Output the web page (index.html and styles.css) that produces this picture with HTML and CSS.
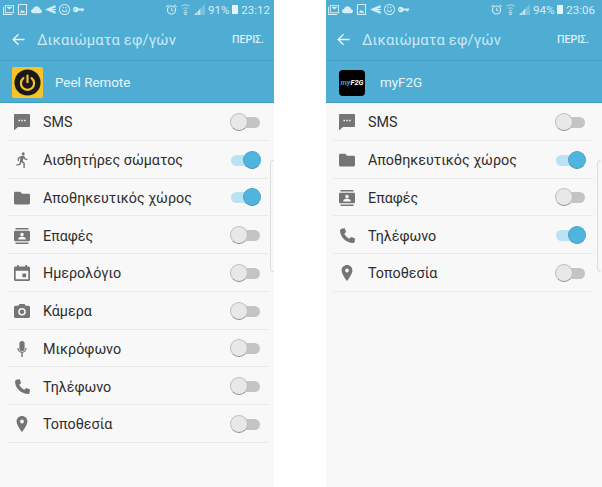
FILE: index.html
```html
<!DOCTYPE html>
<html lang="en">
<head>
  <meta charset="UTF-8">
  <title>Δικαιώματα εφ/γών</title>
  <link rel="stylesheet" href="styles.css">
</head>
<body>

<svg class="defs" width="0" height="0">
  <symbol id="i-sms" viewBox="0 0 16 16"><path d="M1 0h14a1 1 0 0 1 1 1v11a1 1 0 0 1-1 1H4l-4 3.400V1a1 1 0 0 1 1-1z"/><path fill="#f8f8f8" d="M4.500 5.700h1.500v1.500H4.500zM7.300 5.700h1.500v1.500H7.300zM10.100 5.700h1.500v1.500h-1.500z"/></symbol>
  <symbol id="i-run" viewBox="0 0 16 16"><circle cx="9.200" cy="1.800" r="1.500"/><path d="M7 4l3-.4 1.300 2.600 2.300.9-.4 1.200-3-1.100-.7-1.200-.7 3 2 1.900V16h-1.400v-4.300L7.300 10l-.6 2.800-4.200 1-.3-1.300 3.200-.8L6.400 6 5 6.800V9H3.700V6z"/></symbol>
  <symbol id="i-folder" viewBox="0 0 16 16"><path d="M1.300 1.800h5l1.700 2h6.700c.7 0 1.300.6 1.300 1.300v8c0 .7-.6 1.300-1.300 1.300H1.300C.6 14.400 0 13.800 0 13.100V3.100c0-.7.600-1.300 1.300-1.300z"/></symbol>
  <symbol id="i-contact" viewBox="0 0 16 16"><path d="M1.500 0h13v1.400h-13zM1.500 14.600h13V16h-13z"/><path fill-rule="evenodd" d="M1.300 2.700h13.400c.7 0 1.300.6 1.300 1.300v8c0 .7-.6 1.300-1.300 1.300H1.300C.6 13.300 0 12.700 0 12V4c0-.7.600-1.300 1.300-1.300zM8 4.700a1.800 1.800 0 1 0 0 3.600 1.800 1.800 0 0 0 0-3.600zM4.300 11.600h7.400v-1c0-1.300-2.500-1.900-3.700-1.900s-3.700.6-3.700 1.900z"/></symbol>
  <symbol id="i-cal" viewBox="0 0 16 16"><path fill-rule="evenodd" d="M3 0h1.700v1.600h6.600V0H13v1.600h1.500c.8 0 1.500.7 1.500 1.500v11.400c0 .8-.7 1.500-1.500 1.500h-13C.7 16 0 15.300 0 14.500V3.100c0-.8.700-1.500 1.500-1.500H3zM1.700 5.700v8.600h12.600V5.700zM8.400 8.500h3.700v3.700H8.400z"/></symbol>
  <symbol id="i-cam" viewBox="0 0 16 16"><path fill-rule="evenodd" d="M5.500 1h5l1.300 1.700h2.700c.8 0 1.500.7 1.500 1.500v9.300c0 .8-.7 1.500-1.500 1.500h-13C.7 15 0 14.300 0 13.500V4.200c0-.8.700-1.500 1.500-1.500h2.700zM8 5a3.800 3.800 0 1 0 0 7.600A3.800 3.800 0 0 0 8 5zm0 1.500a2.300 2.300 0 1 1 0 4.600 2.300 2.300 0 0 1 0-4.600z"/></symbol>
  <symbol id="i-mic" viewBox="0 0 16 16"><path d="M8 0a2.600 2.600 0 0 1 2.600 2.600v5a2.600 2.600 0 0 1-5.200 0v-5A2.600 2.600 0 0 1 8 0z"/><path d="M3.300 7h1.200c0 2.100 1.500 3.700 3.500 3.700s3.500-1.600 3.500-3.700h1.200c0 2.600-1.900 4.500-4 4.800V16H7.300v-4.200c-2.100-.3-4-2.200-4-4.800z"/></symbol>
  <symbol id="i-phone" viewBox="0 0 16 16"><path d="M3.200.5L5.800.2l1.300 3.700-1.800 1.800c.9 2 2.700 3.900 5 5l1.800-1.800 3.700 1.300v2.700c0 1-.8 2.100-1.800 2.100C6.900 15 1 8.900 1 2.600 1 1.500 2.200.5 3.200.5z"/></symbol>
  <symbol id="i-pin" viewBox="0 0 16 16"><path fill-rule="evenodd" d="M8 0c3 0 5.400 2.400 5.400 5.400C13.400 9.400 8 16 8 16S2.600 9.400 2.600 5.400C2.600 2.400 5 0 8 0zm0 3.600a1.900 1.900 0 1 0 0 3.800 1.900 1.900 0 0 0 0-3.800z"/></symbol>

  <symbol id="s-mail" viewBox="0 0 12 12"><path fill-rule="evenodd" d="M2 1h10v9H2zM3 2v7h8V2zM3.500 3h7L7 6zM0 3h1v8h9v1H0z"/></symbol>
  <symbol id="s-pic" viewBox="0 0 12 12"><path fill-rule="evenodd" d="M2 0h9v12H1V1zM2.200 1.200v9.600h7.600V1.200zM3 9.500l2-3 1.500 1.500 1-1 1.500 2.500z"/></symbol>
  <symbol id="s-cloud" viewBox="0 0 12 12"><path d="M2.500 10C1 10 0 9 0 7.700 0 6.500 1 5.500 2.200 5.500 2.700 3.700 4.300 2.500 6 2.500c2 0 3.700 1.500 3.900 3.300 1.200.1 2.100 1 2.100 2.100S11 10 9.800 10z"/></symbol>
  <symbol id="s-send" viewBox="0 0 12 12"><path d="M11.500 1v3L7 5.500h5v1H7l4.500 1.500v3L0 6z"/></symbol>
  <symbol id="s-face" viewBox="0 0 12 12"><path fill-rule="evenodd" d="M6 0a6 6 0 1 1 0 12A6 6 0 0 1 6 0zm0 1a5 5 0 1 0 0 10A5 5 0 0 0 6 1zM3 6h1c.2 1.200 1 2 2 2s1.800-.8 2-2h1c-.2 1.800-1.400 3-3 3S3.200 7.800 3 6zM4 3h1.200v1.500H4zM6.800 3H8v1.500H6.800z"/></symbol>
  <symbol id="s-key" viewBox="0 0 12 12"><path fill-rule="evenodd" d="M3 3a3 3 0 0 1 2.800 2H12v2h-1.300v1.200H9.300V7H5.800A3 3 0 1 1 3 3zm-.6 2.300a.8.8 0 1 0 0 1.400.8.8 0 0 0 0-1.400z"/></symbol>
  <symbol id="s-alarm" viewBox="0 0 12 12"><path fill-rule="evenodd" d="M6 1.500a5 5 0 1 1 0 10 5 5 0 0 1 0-10zm0 1.200a3.800 3.800 0 1 0 0 7.600 3.800 3.800 0 0 0 0-7.600zM5.500 4h1v2.300l1.600 1-.5.8-2.100-1.300zM0 2.700L2.500.5l.7.7L.7 3.500zM12 2.700L9.500.5l-.7.7 2.500 2.300z"/></symbol>
  <symbol id="s-wifi" viewBox="0 0 12 12"><path fill-opacity=".55" d="M1 2c2.500-2.300 7.500-2.300 10 0l-1 1C8 1.300 4 1.300 2 3zM3 4.500c1.700-1.300 4.300-1.300 6 0l-1 1c-1.200-.8-2.800-.8-4 0z"/><path d="M4.500 6.500h3L6 8.300zM4 9h4v1H4zM4.500 10.800h3v1h-3z"/></symbol>
  <symbol id="s-signal" viewBox="0 0 12 12"><path d="M0 12L12 0v12z" fill-opacity=".3"/><path d="M0 12l3.500-3.500V12zM4.300 12V7.700l2.500-2.500V12z" fill-opacity=".8"/></symbol>
</svg>

<main class="screens">
  <section class="phone phone-left">
    <div class="status">
      <div class="status-icons">
        <svg><use href="#s-mail"/></svg>
        <svg><use href="#s-pic"/></svg>
        <svg><use href="#s-cloud"/></svg>
        <svg><use href="#s-send"/></svg>
        <svg><use href="#s-face"/></svg>
        <svg><use href="#s-key"/></svg>
      </div>
      <div class="status-right">
        <svg><use href="#s-alarm"/></svg>
        <svg><use href="#s-wifi"/></svg>
        <svg><use href="#s-signal"/></svg>
        <span>91%</span>
        <i class="battery"></i>
        <span>23:12</span>
      </div>
    </div>
    <header class="toolbar">
      <svg class="back" viewBox="0 0 14 14"><path d="M13.500 7H1.500M7 1.300L1.300 7 7 12.700"/></svg>
      <h1>Δικαιώματα εφ/γών</h1>
      <a class="more">ΠΕΡΙΣ.</a>
    </header>
    <div class="app">
      <div class="app-logo peel">
        <svg viewBox="0 0 32 32"><circle cx="16" cy="16" r="13.500" fill="#1a1a1a"/><path d="M11.800 11.500a6.800 6.800 0 1 0 8.400 0M16 8.800v7" fill="none" stroke="#f5c32c" stroke-width="2.200" stroke-linecap="round"/></svg>
      </div>
      <span>Peel Remote</span>
    </div>
    <ul class="perms">
      <li class="perm"><svg><use href="#i-sms"/></svg><span>SMS</span><i class="switch"></i></li>
      <li class="perm"><svg><use href="#i-run"/></svg><span>Αισθητήρες σώματος</span><i class="switch on"></i></li>
      <li class="perm"><svg><use href="#i-folder"/></svg><span>Αποθηκευτικός χώρος</span><i class="switch on"></i></li>
      <li class="perm"><svg><use href="#i-contact"/></svg><span>Επαφές</span><i class="switch"></i></li>
      <li class="perm"><svg><use href="#i-cal"/></svg><span>Ημερολόγιο</span><i class="switch"></i></li>
      <li class="perm"><svg><use href="#i-cam"/></svg><span>Κάμερα</span><i class="switch"></i></li>
      <li class="perm"><svg><use href="#i-mic"/></svg><span>Μικρόφωνο</span><i class="switch"></i></li>
      <li class="perm"><svg><use href="#i-phone"/></svg><span>Τηλέφωνο</span><i class="switch"></i></li>
      <li class="perm"><svg><use href="#i-pin"/></svg><span>Τοποθεσία</span><i class="switch"></i></li>
    </ul>
    <div class="edge-handle"></div>
  </section>

  <section class="phone phone-right">
    <div class="status">
      <div class="status-icons">
        <svg><use href="#s-mail"/></svg>
        <svg><use href="#s-cloud"/></svg>
        <svg><use href="#s-pic"/></svg>
        <svg><use href="#s-send"/></svg>
        <svg><use href="#s-face"/></svg>
        <svg><use href="#s-key"/></svg>
      </div>
      <div class="status-right">
        <svg><use href="#s-alarm"/></svg>
        <svg><use href="#s-wifi"/></svg>
        <svg><use href="#s-signal"/></svg>
        <span>94%</span>
        <i class="battery"></i>
        <span>23:06</span>
      </div>
    </div>
    <header class="toolbar">
      <svg class="back" viewBox="0 0 14 14"><path d="M13.500 7H1.500M7 1.300L1.300 7 7 12.700"/></svg>
      <h1>Δικαιώματα εφ/γών</h1>
      <a class="more">ΠΕΡΙΣ.</a>
    </header>
    <div class="app">
      <div class="app-logo f2g"><span class="f2g-my">my</span><span class="f2g-name">F2G</span></div>
      <span>myF2G</span>
    </div>
    <ul class="perms">
      <li class="perm"><svg><use href="#i-sms"/></svg><span>SMS</span><i class="switch"></i></li>
      <li class="perm"><svg><use href="#i-folder"/></svg><span>Αποθηκευτικός χώρος</span><i class="switch on"></i></li>
      <li class="perm"><svg><use href="#i-contact"/></svg><span>Επαφές</span><i class="switch"></i></li>
      <li class="perm"><svg><use href="#i-phone"/></svg><span>Τηλέφωνο</span><i class="switch on"></i></li>
      <li class="perm"><svg><use href="#i-pin"/></svg><span>Τοποθεσία</span><i class="switch"></i></li>
    </ul>
    <div class="edge-handle"></div>
  </section>
</main>

</body>
</html>
```

FILE: styles.css
```css
html, body {
  margin: 0;
  height: 100%;
  overflow: hidden;
  background-color: #fff;
  font-family: Roboto, "Noto Sans", sans-serif;
}
.defs {
  display: block;
  height: 0;
}
.screens {
  display: flex;
  justify-content: space-between;
  height: 487px;
}
.phone {
  position: relative;
  height: 100%;
  background-color: #f8f8f8;
}
.phone-left {
  width: 274px;
}
.phone-right {
  width: 276px;
}
.status, .toolbar, .app {
  background-color: #4fadd4;
  color: #fff;
}
.status {
  height: 19px;
  display: flex;
  align-items: center;
  justify-content: space-between;
  padding: 0 4px 0 3px;
  box-sizing: border-box;
  font-size: 11.500px;
  color: #d6edf6;
}
.phone-right .status {
  padding: 0 7px 0 2px;
}
.status-icons, .status-right {
  display: flex;
  align-items: center;
}
.status-icons {
  gap: 3px;
}
.status-icons svg, .status-right svg {
  width: 11px;
  height: 11px;
  fill: #d6edf6;
}
.status-right {
  gap: 3px;
}
.battery {
  width: 6px;
  height: 9px;
  background: #e6f4fa;
}
.toolbar {
  height: 41px;
  display: flex;
  align-items: center;
  padding: 0 10px 0 12px;
  border-bottom: 1px solid #479fc5;
}
.phone-right .toolbar {
  padding: 0 13px 0 11px;
}
.back {
  width: 13px;
  height: 13px;
  fill: none;
  stroke: #eaf6fb;
  stroke-width: 1.400;
  flex: none;
}
.toolbar h1 {
  margin: 0 0 0 12px;
  font-size: 14.800px;
  font-weight: 400;
  letter-spacing: .15px;
  color: #cde7f2;
  flex: 1;
}
.more {
  font-size: 10.500px;
  font-weight: 500;
  color: #dff0f7;
}
.app {
  height: 42px;
  display: flex;
  align-items: center;
  padding: 2px 0 0 12px;
  font-size: 13.400px;
  color: #e8f5fa;
  border-bottom: 1px solid #3f9ac0;
  box-sizing: border-box;
}
.phone-right .app {
  padding-left: 13px;
}
.app > span {
  margin-left: 12px;
}
.app-logo {
  width: 31px;
  height: 31px;
  flex: none;
  border-radius: 2px;
}
.peel {
  background-color: #f5c32c;
}
.peel svg {
  display: block;
  width: 31px;
  height: 31px;
}
.f2g {
  background-color: #000;
  border-radius: 4px;
  display: flex;
  align-items: center;
  justify-content: center;
  font-size: 7.500px;
  font-weight: 700;
  font-style: italic;
  width: 26px;
  height: 26px;
  margin-right: 3px;
}
.f2g-my {
  color: #3fa2dc;
}
.f2g-name {
  color: #fff;
}
.perms {
  list-style: none;
  margin: 0;
  padding: 0;
}
.perm {
  height: 37.750px;
  display: flex;
  align-items: center;
  padding-top: 2px;
  margin: 0 6px 0 8px;
  box-sizing: border-box;
  border-bottom: 1px solid #e9e9e9;
  font-size: 14.300px;
  color: #2e2e2e;
}
.phone-right .perm {
  margin: 0 9px 0 7px;
}
.perm svg {
  width: 16px;
  height: 16px;
  margin-left: 6px;
  fill: #757575;
  flex: none;
}
.perm span {
  margin-left: 13px;
  flex: 1;
}
.switch {
  position: relative;
  width: 29px;
  height: 11px;
  border-radius: 6px;
  margin-right: 8px;
  background-color: #c4c4c4;
}
.switch::after {
  content: "";
  position: absolute;
  left: -1px;
  top: -4px;
  width: 18px;
  height: 18px;
  box-sizing: border-box;
  border-radius: 50%;
  background-color: #e8e8e8;
  border: 1px solid #bdbdbd;
  border-bottom-color: #8f8f8f;
}
.switch.on {
  background-color: #b9e2f2;
}
.switch.on::after {
  left: 12px;
  background-color: #4fb4de;
  border-color: #4aa6cc;
  border-bottom-color: #5b8ca3;
}
.edge-handle {
  position: absolute;
  right: 0;
  top: 160px;
  width: 4px;
  height: 112px;
  box-sizing: border-box;
  border: 1px solid #dcdcdc;
  border-right: none;
  border-radius: 5px 0 0 5px;
}
.phone-right .edge-handle {
  right: 1px;
}
```
